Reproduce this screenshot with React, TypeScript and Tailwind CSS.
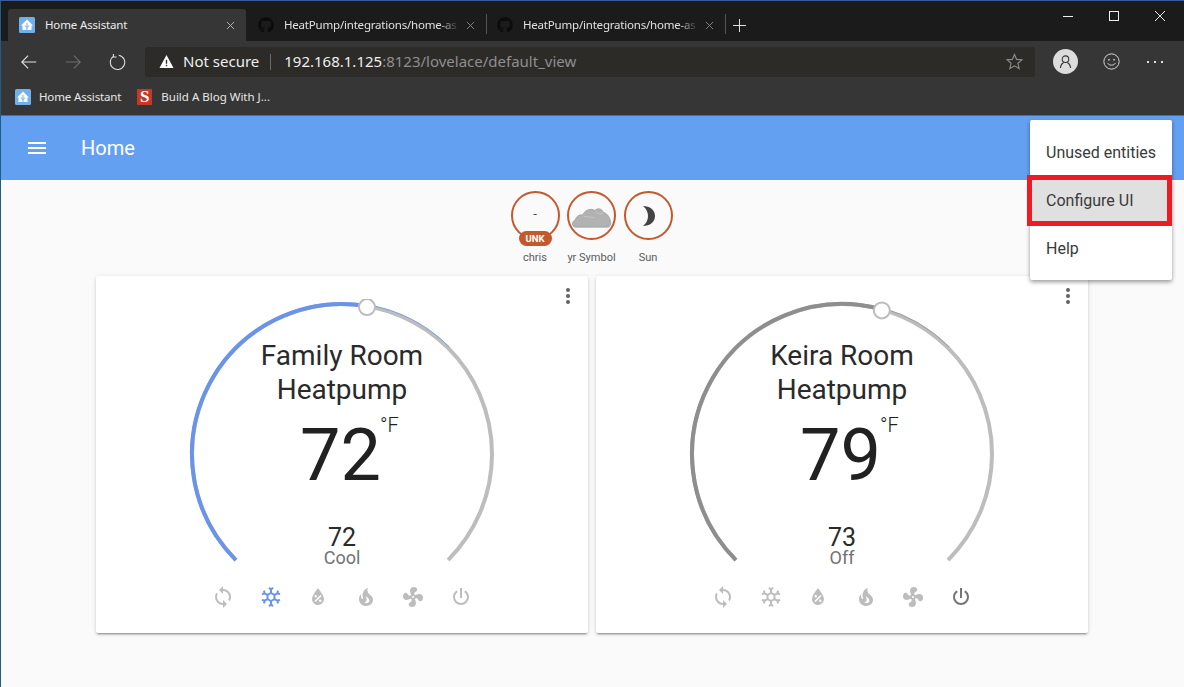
import React from 'react';
import { FaGithub } from 'react-icons/fa';

const icons = {
  sync: 'M12,18A6,6 0 0,1 6,12C6,11 6.25,10.03 6.7,9.2L5.24,7.74C4.46,8.97 4,10.43 4,12A8,8 0 0,0 12,20V23L16,19L12,15M12,4V1L8,5L12,9V6A6,6 0 0,1 18,12C18,13 17.75,13.97 17.3,14.8L18.76,16.26C19.54,15.03 20,13.57 20,12A8,8 0 0,0 12,4Z',
  snow: 'M20.79,13.95L18.46,14.57L16.46,13.44V10.56L18.46,9.43L20.79,10.05L21.31,8.12L19.54,7.65L20,5.88L18.07,5.36L17.45,7.69L15.45,8.82L13,7.38V5.12L14.71,3.41L13.29,2L12,3.29L10.71,2L9.29,3.41L11,5.12V7.38L8.5,8.82L6.5,7.69L5.92,5.36L4,5.88L4.47,7.65L2.7,8.12L3.22,10.05L5.55,9.43L7.55,10.56V13.45L5.55,14.58L3.22,13.96L2.7,15.89L4.47,16.36L4,18.12L5.93,18.64L6.55,16.31L8.55,15.18L11,16.62V18.88L9.29,20.59L10.71,22L12,20.71L13.29,22L14.7,20.59L13,18.88V16.62L15.5,15.17L17.5,16.3L18.12,18.63L20,18.12L19.53,16.35L21.3,15.88L20.79,13.95M9.5,10.56L12,9.11L14.5,10.56V13.44L12,14.89L9.5,13.44V10.56Z',
  water: 'M12,3.25C12,3.25 6,10 6,14C6,17.32 8.69,20 12,20A6,6 0 0,0 18,14C18,10 12,3.25 12,3.25M14.47,9.97L15.53,11.03L9.53,17.03L8.47,15.97M9.75,10A1.25,1.25 0 0,1 11,11.25A1.25,1.25 0 0,1 9.75,12.5A1.25,1.25 0 0,1 8.5,11.25A1.25,1.25 0 0,1 9.75,10M14.25,14.5A1.25,1.25 0 0,1 15.5,15.75A1.25,1.25 0 0,1 14.25,17A1.25,1.25 0 0,1 13,15.75A1.25,1.25 0 0,1 14.25,14.5Z',
  fire: 'M17.66 11.2C17.43 10.9 17.15 10.64 16.89 10.38C16.22 9.78 15.46 9.35 14.82 8.72C13.33 7.26 13 4.85 13.95 3C13 3.23 12.17 3.75 11.46 4.32C8.87 6.4 7.85 10.07 9.07 13.22C9.11 13.32 9.15 13.42 9.15 13.55C9.15 13.77 9 13.97 8.8 14.05C8.57 14.15 8.33 14.09 8.14 13.93C8.08 13.88 8.04 13.83 8 13.76C6.87 12.33 6.69 10.28 7.45 8.64C5.78 10 4.87 12.3 5 14.47C5.06 14.97 5.12 15.47 5.29 15.97C5.43 16.57 5.7 17.17 6 17.7C7.08 19.43 8.95 20.67 10.96 20.92C13.1 21.19 15.39 20.8 17.03 19.32C18.86 17.66 19.5 15 18.56 12.72L18.43 12.46C18.22 12 17.66 11.2 17.66 11.2M14.5 17.5C14.22 17.74 13.76 18 13.4 18.1C12.28 18.5 11.16 17.94 10.5 17.28C11.69 17 12.4 16.12 12.61 15.23C12.78 14.43 12.46 13.77 12.33 13C12.21 12.26 12.23 11.63 12.5 10.94C12.69 11.32 12.89 11.7 13.13 12C13.9 13 15.11 13.44 15.37 14.8C15.41 14.94 15.43 15.08 15.43 15.23C15.46 16.05 15.1 16.95 14.5 17.5H14.5Z',
  fan: 'M12,11A1,1 0 0,0 11,12A1,1 0 0,0 12,13A1,1 0 0,0 13,12A1,1 0 0,0 12,11M12.5,2C17,2 17.11,5.57 14.75,6.75C13.76,7.24 13.32,8.29 13.13,9.22C13.61,9.42 14.03,9.73 14.35,10.13C18.05,8.13 22.03,8.92 22.03,12.5C22.03,17 18.46,17.1 17.28,14.73C16.78,13.74 15.72,13.3 14.79,13.11C14.59,13.59 14.28,14 13.88,14.34C15.87,18.03 15.08,22 11.5,22C7,22 6.91,18.42 9.27,17.24C10.25,16.75 10.69,15.71 10.89,14.79C10.4,14.59 9.97,14.27 9.65,13.87C5.96,15.85 2,15.07 2,11.5C2,7 5.56,6.89 6.74,9.26C7.24,10.25 8.29,10.68 9.22,10.87C9.41,10.39 9.73,9.97 10.14,9.65C8.15,5.96 8.94,2 12.5,2Z',
  power: 'M16.56,5.44L15.11,6.89C16.84,7.94 18,9.83 18,12A6,6 0 0,1 12,18A6,6 0 0,1 6,12C6,9.83 7.16,7.94 8.88,6.88L7.44,5.44C5.36,6.88 4,9.28 4,12A8,8 0 0,0 12,20A8,8 0 0,0 20,12C20,9.28 18.64,6.88 16.56,5.44M13,3H11V13H13',
  dots: 'M12,16A2,2 0 0,1 14,18A2,2 0 0,1 12,20A2,2 0 0,1 10,18A2,2 0 0,1 12,16M12,10A2,2 0 0,1 14,12A2,2 0 0,1 12,14A2,2 0 0,1 10,12A2,2 0 0,1 12,10M12,4A2,2 0 0,1 14,6A2,2 0 0,1 12,8A2,2 0 0,1 10,6A2,2 0 0,1 12,4Z',
};

const Mdi: React.FC<{ d: string; className: string }> = ({ d, className }) => (
  <svg viewBox="0 0 24 24" className={className} fill="currentColor">
    <path d={d} />
  </svg>
);

const HaLogo = () => (
  <svg viewBox="0 0 16 16" className="w-[16px] h-[16px] shrink-0">
    <rect width="16" height="16" rx="1.5" fill="#6fb1e8" />
    <path d="M8 2.5 L14 8.5 H12.5 V13 H3.5 V8.5 H2 Z" fill="#fff" />
    <path d="M8 6 V13 M5.8 8.5 L8 10.5 L10.2 8.5" stroke="#6fb1e8" strokeWidth="1" fill="none" />
  </svg>
);

const Tab: React.FC = () => (
  <div className="w-[239px] h-8 flex items-center pl-[10px] relative shrink-0">
    <FaGithub className="w-[16px] h-[16px] text-[#0c0c0c] shrink-0" />
    <span className="ml-[10px] w-[176px] shrink-0 whitespace-nowrap text-[11.5px] tracking-[-0.2px] text-[#e0e0e0] [mask-image:linear-gradient(to_right,black_88%,transparent)]">HeatPump/integrations/home-as</span>
    <svg viewBox="0 0 10 10" className="w-[9px] h-[9px] ml-[6px] shrink-0 text-[#8a8a8a]" stroke="currentColor" fill="none">
      <path d="M1 1 L9 9 M9 1 L1 9" />
    </svg>
    <div className="absolute right-0 top-[5px] h-5 w-px bg-[#555]" />
  </div>
);

const TabStrip = () => (
  <div className="h-[40px] bg-[#1b1b1b] flex items-end pl-[7px] pr-px relative">
    <div className="w-[238px] h-8 bg-[#363636] rounded-t-[3px] flex items-center pl-[11px] pr-[10px] shrink-0">
      <HaLogo />
      <span className="ml-[10px] text-[11.5px] tracking-[-0.15px] text-[#ececec] flex-1">Home Assistant</span>
      <svg viewBox="0 0 10 10" className="w-[9px] h-[9px] mr-[1px] text-[#bbb]" stroke="currentColor" fill="none">
        <path d="M1 1 L9 9 M9 1 L1 9" />
      </svg>
    </div>
    <div className="ml-[2px] flex">
      <Tab />
      <Tab />
    </div>
    <svg viewBox="0 0 14 14" className="w-[13px] h-[13px] ml-[7px] mb-[9px] text-[#eee]" stroke="currentColor" fill="none">
      <path d="M7 0 V14 M0 7 H14" />
    </svg>
    <div className="ml-auto flex items-start self-start text-[#eee]">
      <div className="w-[46px] h-[30px] flex items-center justify-center">
        <svg viewBox="0 0 10 10" className="w-[10px] h-[10px]" stroke="currentColor"><path d="M0 5.5 H10" /></svg>
      </div>
      <div className="w-[46px] h-[30px] flex items-center justify-center">
        <div className="w-[10px] h-[10px] border border-[#eee]" />
      </div>
      <div className="w-[46px] h-[30px] flex items-center justify-center">
        <svg viewBox="0 0 10 10" className="w-[10px] h-[10px]" stroke="currentColor"><path d="M0 0 L10 10 M10 0 L0 10" /></svg>
      </div>
    </div>
  </div>
);

const Toolbar = () => (
  <div className="h-[41px] bg-[#363636] flex items-center pl-[19px] text-[#e0e0e0]">
    <svg viewBox="0 0 20 20" className="w-[18px] h-[18px]" stroke="currentColor" strokeWidth="1.2" fill="none">
      <path d="M18 10 H2 M9 3 L2 10 L9 17" />
    </svg>
    <svg viewBox="0 0 20 20" className="w-[18px] h-[18px] ml-[26px] text-[#6e6e6e]" stroke="currentColor" strokeWidth="1.2" fill="none">
      <path d="M2 10 H18 M11 3 L18 10 L11 17" />
    </svg>
    <svg viewBox="0 0 20 20" className="w-[18px] h-[18px] ml-[26px]" stroke="currentColor" strokeWidth="1.2" fill="none">
      <path d="M6.5 3.5 A8 8 0 1 0 12 2.5 M6 1 V4.5 H9.5" />
    </svg>
    <div className="ml-[19px] w-[890px] h-[30px] bg-[#2c2b27] rounded-[3px] flex items-center pl-[14px] pr-[12px]">
      <svg viewBox="0 0 16 16" className="w-[15px] h-[15px]">
        <path d="M8 1 L15.5 15 H0.5 Z" fill="#fff" />
        <path d="M8 6 V10.5 M8 11.5 V13" stroke="#2c2b27" strokeWidth="1.4" />
      </svg>
      <span className="ml-[9px] text-[15px] text-[#efefef]">Not secure</span>
      <div className="ml-[11px] w-px h-4 bg-[#6a6a6a]" />
      <span className="ml-[13px] text-[15px] text-[#efefef] whitespace-nowrap">192.168.1.125<span className="text-[#8f8f8f]">:8123/lovelace/default_view</span></span>
      <svg viewBox="0 0 24 24" className="ml-auto w-[17px] h-[17px] text-[#8f8f8f]" stroke="currentColor" strokeWidth="1.5" fill="none">
        <path d="M12 2 L15 9 L22.5 9.6 L16.8 14.5 L18.6 22 L12 18 L5.4 22 L7.2 14.5 L1.5 9.6 L9 9 Z" />
      </svg>
    </div>
    <div className="ml-[18px] w-[25px] h-[25px] rounded-full bg-[#dcdcdc] flex items-center justify-center">
      <svg viewBox="0 0 16 16" className="w-[15px] h-[15px] text-[#333]" stroke="currentColor" strokeWidth="1.1" fill="none">
        <circle cx="8" cy="5.5" r="3.5" />
        <path d="M2.5 15 C3 10.5 5 9.5 6 9 M13.5 15 C13 10.5 11 9.5 10 9" />
      </svg>
    </div>
    <svg viewBox="0 0 20 20" className="ml-[25px] w-[17px] h-[17px]" stroke="currentColor" strokeWidth="1.1" fill="none">
      <circle cx="10" cy="10" r="9" />
      <circle cx="7" cy="8" r="0.6" />
      <circle cx="13" cy="8" r="0.6" />
      <path d="M5.5 12 C7 15 13 15 14.5 12" />
    </svg>
    <div className="ml-[27px] flex gap-[5px]">
      <div className="w-[2px] h-[2px] bg-[#e0e0e0]" />
      <div className="w-[2px] h-[2px] bg-[#e0e0e0]" />
      <div className="w-[2px] h-[2px] bg-[#e0e0e0]" />
    </div>
  </div>
);

const Bookmarks = () => (
  <div className="h-[34px] bg-[#363636] flex items-center pl-[14px] pb-[4px] text-[11.5px] text-[#e8e8e8] border-b border-[#5a6a80]">
    <HaLogo />
    <span className="ml-[8px] tracking-[-0.15px]">Home Assistant</span>
    <div className="ml-[16px] w-[15px] h-[16px] bg-[#c23b2a] flex items-center justify-center text-white font-bold text-[17px] leading-none" style={{ fontFamily: '"Liberation Serif", serif' }}>S</div>
    <span className="ml-[9px]">Build A Blog With J...</span>
  </div>
);

const Badge: React.FC<{ label: string; children: React.ReactNode }> = ({ label, children }) => (
  <div className="w-[56.5px] flex flex-col items-center">
    <div className="relative w-[49px] h-[49px] rounded-full border-2 border-[#c4592d] flex items-center justify-center">
      {children}
    </div>
    <div className="mt-[11px] text-[11px] leading-[14px] text-[#5a5a5a] whitespace-nowrap">{label}</div>
  </div>
);

const polar = (angle: number, r: number) => {
  const a = (angle * Math.PI) / 180;
  return [155 + r * Math.sin(a), 155 - r * Math.cos(a)];
};
const arc = (from: number, to: number, r = 150) => {
  const [x1, y1] = polar(from, r);
  const [x2, y2] = polar(to, r);
  return `M ${x1.toFixed(2)} ${y1.toFixed(2)} A ${r} ${r} 0 ${to - from > 180 ? 1 : 0} 1 ${x2.toFixed(2)} ${y2.toFixed(2)}`;
};

const Gauge: React.FC<{ activeColor: string; sliverColor: string; handle: number }> = ({ activeColor, sliverColor, handle }) => {
  const [hx, hy] = polar(handle, 149);
  return (
    <svg viewBox="0 0 310 310" className="absolute left-[91px] top-[23px] w-[310px] h-[310px]" fill="none">
      <path d={arc(-135, 135)} stroke="#bdbdbd" strokeWidth="4" />
      <path d={arc(handle, 45, 151.5)} stroke={sliverColor} strokeWidth="1" opacity="0.7" />
      <path d={arc(-135, handle)} stroke={activeColor} strokeWidth="4" />
      <circle cx={hx} cy={hy} r="8" fill="#fff" stroke="#bdbdbd" strokeWidth="2" />
    </svg>
  );
};

const ThermostatCard: React.FC<{
  name: string;
  temp: string;
  current: string;
  mode: string;
  activeColor: string;
  sliverColor: string;
  handle: number;
  activeIcon: 'snow' | 'power';
}> = ({ name, temp, current, mode, activeColor, sliverColor, handle, activeIcon }) => (
  <div className="relative w-[492px] h-[357px] bg-white rounded-[2px] shadow-[0_2px_2px_rgba(0,0,0,0.14),0_1px_5px_rgba(0,0,0,0.12),0_3px_1px_-2px_rgba(0,0,0,0.2)] flex flex-col items-center pt-[63px]">
    <Gauge activeColor={activeColor} sliverColor={sliverColor} handle={handle} />
    <Mdi d={icons.dots} className="absolute right-[8px] top-[8px] w-[24px] h-[24px] text-[#616161]" />
    <div className="text-[28px] leading-[34px] text-[#2a2a2a] text-center relative">{name}<br />Heatpump</div>
    <div className="relative mt-[5px] pr-[3px] text-[72px] leading-[88px] font-normal text-[#212121]">
      {temp}
      <span className="absolute left-full top-[2px] -ml-[4px] text-[20px] leading-[22px] font-light">°F</span>
    </div>
    <div className="mt-[26px] text-[25px] leading-[23px] text-[#2a2a2a] relative">{current}</div>
    <div className="text-[18px] leading-[18px] text-[#727272] relative">{mode}</div>
    <div className="absolute left-0 right-0 top-[309px] flex justify-center gap-[23.6px]">
      {(['sync', 'snow', 'water', 'fire', 'fan', 'power'] as const).map((k) => (
        <Mdi
          key={k}
          d={icons[k]}
          className={`w-[24px] h-[24px] ${k === activeIcon ? (k === 'snow' ? 'text-[#6a93ea]' : 'text-[#757575]') : 'text-[#bdbdbd]'}`}
        />
      ))}
    </div>
  </div>
);

const PopupMenu = () => (
  <div className="absolute left-[1029px] top-[4px] w-[142px] h-[160px] bg-white rounded-[2px] shadow-[0_2px_4px_rgba(0,0,0,0.4)] py-[8px] text-[16px] text-[#3a3a3a]">
    <div className="h-[48px] flex items-center pl-[16px] pt-[1px]">Unused entities</div>
    <div className="relative h-[48px] flex items-center pl-[16px] pt-[1px] bg-[#e0e0e0]">
      Configure UI
      <div className="absolute -left-[3px] right-0 -top-px -bottom-[2px] border-[5px] border-[#ed1c24]" />
    </div>
    <div className="h-[48px] flex items-center pl-[16px] pt-[1px]">Help</div>
  </div>
);

const App: React.FC = () => {
  return (
    <div className="w-[1184px] h-[687px] overflow-hidden flex flex-col border-t border-t-[#3a5a9c] border-l border-l-[#205c88] bg-[#fafafa]" style={{ fontFamily: 'Roboto, sans-serif' }}>
      <div style={{ fontFamily: '"Noto Sans", sans-serif' }}>
        <TabStrip />
        <Toolbar />
        <Bookmarks />
      </div>
      <div className="relative flex-1">
        <header className="h-[64px] bg-[#64a0f2] flex items-center pl-[24px] text-white">
          <svg viewBox="0 0 24 24" className="w-[24px] h-[24px]" fill="currentColor">
            <path d="M3,6H21V8H3V6M3,11H21V13H3V11M3,16H21V18H3V16Z" />
          </svg>
          <span className="ml-[32px] text-[20px]">Home</span>
        </header>
        <div className="flex justify-center pt-[11px] pr-[2px]">
          <Badge label="chris">
            <span className="text-[13px] text-[#444] -mt-[3px]">-</span>
            <span className="absolute left-[6px] -bottom-[8px] w-[33px] h-[15px] rounded-full bg-[#c4592d] text-white text-[9.5px] font-bold leading-[15px] text-center">UNK</span>
          </Badge>
          <Badge label="yr Symbol">
            <svg viewBox="0 0 44 28" className="w-[42px] h-[26px] ml-[1px]">
              <path d="M4 26 C0 25 0 20 4 18 C5 14 9 12 12 13 C14 8 20 5 25 8 C28 5 33 6 34 10 C39 11 43 18 42 23 C41 26 40 26 38 26 Z" fill="#b2b2b2" stroke="#9c9c9c" strokeWidth="0.8" />
              <path d="M13 14 C17 16 20 14 24 16 M26 9 C28 12 31 12 34 11" stroke="#c8c8c8" strokeWidth="1" fill="none" />
            </svg>
          </Badge>
          <Badge label="Sun">
            <svg viewBox="0 0 24 24" className="w-[24px] h-[24px]" fill="#444">
              <path d="M7 2 C14 2 19 6 19 12 C19 18 14 22 7 22 C10.5 19 12 16 12 12 C12 8 10.5 5 7 2 Z" />
            </svg>
          </Badge>
        </div>
        <div className="flex gap-[8px] pl-[95px] mt-[11px]">
          <ThermostatCard name="Family Room" temp="72" current="72" mode="Cool" activeColor="#6a93ea" sliverColor="#6a93ea" handle={9.65} activeIcon="snow" />
          <ThermostatCard name="Keira Room" temp="79" current="73" mode="Off" activeColor="#8e8e8e" sliverColor="#8e8e8e" handle={15.5} activeIcon="power" />
        </div>
        <PopupMenu />
      </div>
    </div>
  );
};

export default App;
